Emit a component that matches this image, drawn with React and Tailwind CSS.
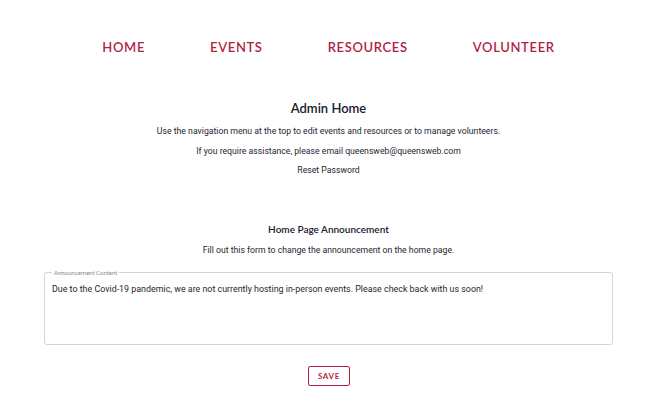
import { useState } from "react";

const navItems = ["Home", "Events", "Resources", "Volunteer"];

function App() {
  const [announcement, setAnnouncement] = useState(
    "Due to the Covid-19 pandemic, we are not currently hosting in-person events. Please check back with us soon!",
  );

  return (
    <div className="w-[650px] h-[418px] bg-white pl-[7px] font-['Roboto',sans-serif] text-[#1c2733]">
      {/* Nav */}
      <nav className="flex justify-center gap-[65px] pt-[38px] font-['Lato',sans-serif]">
        {navItems.map((item) => (
          <a
            key={item}
            href="#"
            className="text-[13px] leading-[18px] font-semibold uppercase tracking-[0.05em] text-[#b11f45]"
          >
            {item}
          </a>
        ))}
      </nav>

      {/* Admin info */}
      <div className="flex flex-col items-center mt-[42px]">
        <h1 className="font-['Lato',sans-serif] text-[13px] leading-[20px] font-semibold text-[#14202c]">
          Admin Home
        </h1>
        <p className="text-[8.7px] leading-[13px] mt-[6.5px]">
          Use the navigation menu at the top to edit events and resources or to manage volunteers.
        </p>
        <p className="text-[8.7px] leading-[13px] mt-[7px]">
          If you require assistance, please email queensweb@queensweb.com
        </p>
        <p className="text-[8.7px] leading-[13px] mt-[6px]">Reset Password</p>
      </div>

      {/* Announcement form */}
      <div className="flex flex-col items-center mt-[44.5px]">
        <h2 className="font-['Lato',sans-serif] text-[10px] leading-[16px] font-semibold text-[#14202c]">
          Home Page Announcement
        </h2>
        <p className="text-[8.7px] leading-[13px] mt-[6.5px]">
          Fill out this form to change the announcement on the home page.
        </p>
      </div>

      <div className="px-[37px] mt-[12px]">
        <fieldset className="border border-[#d4d4d4] rounded-[3px] h-[76px] px-[7px]">
          <legend className="text-[6px] leading-[8px] text-[#8a8a8a] px-[2px]">
            Announcement Content
          </legend>
          <textarea
            value={announcement}
            onChange={(e) => setAnnouncement(e.target.value)}
            className="w-full resize-none outline-none text-[8.9px] leading-[13px] text-[#1f1f1f] mt-[6px] h-[50px]"
          />
        </fieldset>
      </div>

      <div className="flex justify-center mt-[21.5px]">
        <button className="border border-[#b11f45] rounded-[2px] w-[42px] h-[20px] font-['Lato',sans-serif] text-[8px] font-bold tracking-[0.08em] text-[#b11f45] pl-[1px]">
          SAVE
        </button>
      </div>
    </div>
  );
}

export default App;
